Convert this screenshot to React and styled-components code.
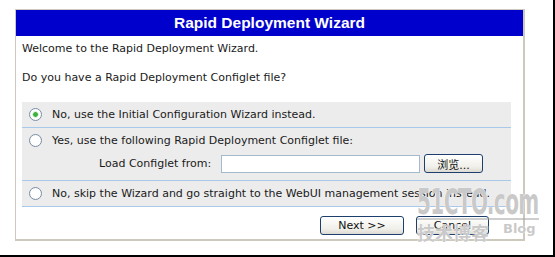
import React, { useState } from 'react'
import styled, { createGlobalStyle } from 'styled-components'

const GlobalStyle = createGlobalStyle`
  html, body {
    margin: 0;
    padding: 0;
    background: #fff;
  }
`

const options = [
  { id: 'initial', label: 'No, use the Initial Configuration Wizard instead.' },
  { id: 'configlet', label: 'Yes, use the following Rapid Deployment Configlet file:' },
  { id: 'skip', label: 'No, skip the Wizard and go straight to the WebUI management session instead.' },
]

export default function App() {
  const [choice, setChoice] = useState('initial')
  const [file, setFile] = useState('')

  return (
    <>
      <GlobalStyle />
      <Page>
        <Frame>
          <Header>Rapid Deployment Wizard</Header>
          <Body>
            <Line $top={6}>Welcome to the Rapid Deployment Wizard.</Line>
            <Line $top={15}>Do you have a Rapid Deployment Configlet file?</Line>
            <OptionList>
              {options.map((o) => (
                <Option key={o.id} $tall={o.id === 'configlet'}>
                  <OptionRow onClick={() => setChoice(o.id)}>
                    <Radio $checked={choice === o.id} />
                    <span>{o.label}</span>
                  </OptionRow>
                  {o.id === 'configlet' && (
                    <LoadRow>
                      <LoadLabel>Load Configlet from:</LoadLabel>
                      <FileInput value={file} onChange={(e) => setFile(e.target.value)} />
                      <Button $w={59}>浏览...</Button>
                    </LoadRow>
                  )}
                </Option>
              ))}
            </OptionList>
            <Actions>
              <Button $w={84}>Next &gt;&gt;</Button>
              <Button $w={73}>Cancel</Button>
            </Actions>
          </Body>
        </Frame>
        <Watermark>
          <WmBig>51CTO.com</WmBig>
          <WmRule />
          <WmBottom>
            <WmCn>技术博客</WmCn>
            <WmBlog>Blog</WmBlog>
          </WmBottom>
        </Watermark>
      </Page>
    </>
  )
}

const Page = styled.div`
  position: relative;
  overflow: hidden;
  border-right: 2px solid #000;
  border-bottom: 2px solid #000;
  padding: 9px 0 0 15px;
  box-sizing: content-box;
  height: 246px;
  width: 538px;
  font-family: 'DejaVu Sans', Verdana, sans-serif;
  font-size: 11px;
  color: #1a1a1a;
`

const Frame = styled.div`
  width: 507px;
  height: 229px;
  border: 1px solid #cdc9bc;
  border-right-width: 2px;
  border-bottom-width: 2px;
  display: flex;
  flex-direction: column;
`

const Header = styled.div`
  height: 26px;
  background: #0000cc;
  color: #fff;
  font-family: 'Liberation Sans', Arial, sans-serif;
  font-weight: bold;
  font-size: 15.5px;
  display: flex;
  align-items: center;
  justify-content: center;
`

const Body = styled.div`
  padding: 0 12px 0 6px;
  display: flex;
  flex-direction: column;
`

const Line = styled.div`
  margin-top: ${(p) => p.$top}px;
  line-height: 14px;
`

const OptionList = styled.div`
  margin-top: 17px;
  display: flex;
  flex-direction: column;
`

const Option = styled.div`
  background: #ececec;
  border-bottom: 1px solid #a9c9ea;
  height: ${(p) => (p.$tall ? 52 : 25)}px;
  display: flex;
  flex-direction: column;
`

const OptionRow = styled.label`
  height: 25px;
  display: flex;
  align-items: center;
  gap: 10px;
  padding-left: 7px;
  cursor: pointer;
`

const Radio = styled.span`
  width: 11px;
  height: 11px;
  border-radius: 50%;
  border: 1px solid #7a8ea6;
  background: ${(p) =>
    p.$checked
      ? 'radial-gradient(circle, #3bb23b 0 2px, #b8e0b8 2.5px, #fff 3.5px)'
      : 'radial-gradient(circle, #fff 0 55%, #eef0f4 100%)'};
  flex: none;
`

const LoadRow = styled.div`
  display: flex;
  align-items: center;
  padding-left: 77px;
  margin-top: 1px;
`

const LoadLabel = styled.span`
  width: 122px;
`

const FileInput = styled.input`
  width: 193px;
  height: 14px;
  border: 1px solid #a5b8cc;
  padding: 1px 2px;
  margin: 0 4px 0 0;
  font: inherit;
`

const Button = styled.button`
  width: ${(p) => p.$w}px;
  height: 19px;
  padding: 0;
  border: 1px solid #1d3f6e;
  border-radius: 3px;
  background: linear-gradient(#ffffff, #f0efe9 70%, #dcdad2);
  font-family: 'DejaVu Sans', Verdana, 'Noto Sans CJK SC', sans-serif;
  font-size: 11px;
  color: #111;
`

const Actions = styled.div`
  display: flex;
  justify-content: flex-end;
  gap: 12px;
  margin-top: 9px;
  padding-right: 22px;
`

const Watermark = styled.div`
  position: absolute;
  left: 417px;
  top: 187px;
  display: flex;
  flex-direction: column;
  color: rgba(165, 165, 165, 0.6);
  pointer-events: none;
  text-shadow: 0 0 1px #fff, 0 0 1px #fff;
  white-space: nowrap;
`

const WmBig = styled.div`
  width: 122px;
  font-family: 'DejaVu Sans Condensed', 'DejaVu Sans', sans-serif;
  font-weight: bold;
  font-size: 36px;
  line-height: 30px;
  letter-spacing: -1px;
  transform: scaleX(0.62);
  transform-origin: left;
`

const WmRule = styled.div`
  width: 122px;
  height: 2px;
  margin-top: 1px;
  background: rgba(165, 165, 165, 0.55);
`

const WmBottom = styled.div`
  display: flex;
  align-items: flex-start;
  gap: 14px;
`

const WmCn = styled.span`
  flex: none;
  font-family: 'Noto Sans CJK SC', sans-serif;
  font-weight: bold;
  font-size: 18px;
  line-height: 25px;
`

const WmBlog = styled.span`
  flex: none;
  font-family: 'DejaVu Sans', sans-serif;
  font-weight: bold;
  font-size: 13px;
  line-height: 18px;
`
